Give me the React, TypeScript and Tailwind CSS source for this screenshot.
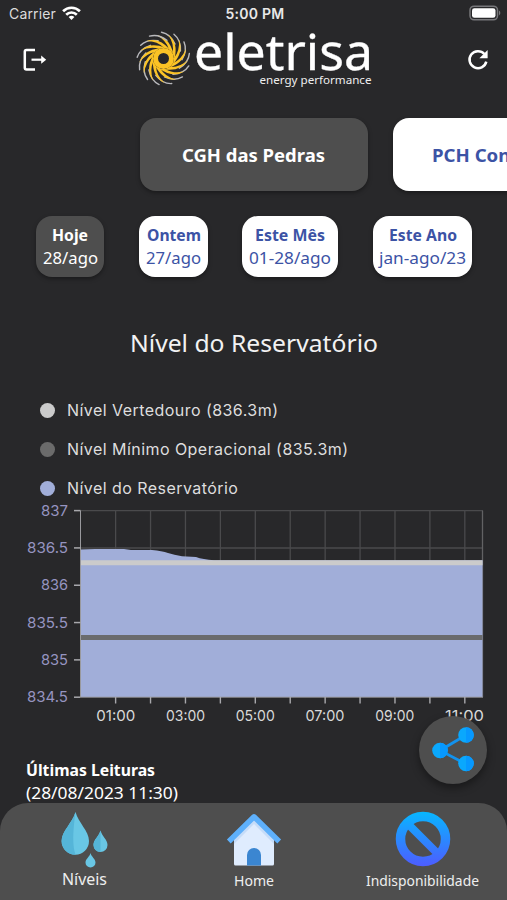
const PLANTS = [
  { name: "CGH das Pedras", active: true },
  { name: "PCH Confluência", active: false },
];

const PERIODS = [
  { label: "Hoje", range: "28/ago", size: "w-[68px]", labelWidth: 36, rangeWidth: 55, active: true },
  { label: "Ontem", range: "27/ago", size: "w-[69px] ml-[35px]", labelWidth: 54, rangeWidth: 55, active: false },
  { label: "Este Mês", range: "01-28/ago", size: "w-24 ml-[34px]", labelWidth: 70, rangeWidth: 82, active: false },
  { label: "Este Ano", range: "jan-ago/23", size: "w-[99px] ml-[35px]", labelWidth: 68, rangeWidth: 87, active: false },
];

const LEGEND = [
  { label: "Nível Vertedouro (836.3m)", color: "bg-[#cbcbcb]" },
  { label: "Nível Mínimo Operacional (835.3m)", color: "bg-[#6b6b6b]" },
  { label: "Nível do Reservatório", color: "bg-[#a1aed9]" },
];

const Y_TICKS = ["837", "836.5", "836", "835.5", "835", "834.5"];
const HOURS = [1, 2, 3, 4, 5, 6, 7, 8, 9, 10, 11];
const BLADES = Array.from({ length: 13 }, (_, i) => (i * 360) / 13);

const StatusBar = () => (
  <div className="flex h-7 shrink-0 items-center justify-between pl-[9px] pr-[6px] font-['Inter',sans-serif] text-white">
    <div className="flex w-[110px] items-center gap-[6px] text-[14px] text-[#dcdcdc]">
      <span className="relative -top-px tracking-[0.15px]">Carrier</span>
      <svg className="relative -top-px" width="19" height="15" viewBox="0 0 19 15" fill="none" stroke="#fff" strokeWidth="2.7">
        <path d="M1.1 5.2a12 12 0 0 1 16.8 0" />
        <path d="M4.2 8.7a7.5 7.5 0 0 1 10.6 0" />
        <path d="M9.5 14 6.6 11.1a4.1 4.1 0 0 1 5.8 0Z" fill="#fff" stroke="none" />
      </svg>
    </div>
    <span className="relative -top-px text-[14px] font-semibold tracking-[0.25px] text-[#e8e8e8]">5:00 PM</span>
    <div className="flex w-[110px] justify-end">
      <svg className="relative -top-px" width="32" height="16" viewBox="0 0 32 16">
        <rect x="1" y="1.2" width="27.5" height="13.6" rx="4" fill="none" stroke="#77777a" strokeWidth="1.5" />
        <rect x="3" y="3.2" width="23.5" height="9.6" rx="2.4" fill="#fff" />
        <path d="M30 5.6c1.8.8 1.8 4 0 4.8Z" fill="#77777a" />
      </svg>
    </div>
  </div>
);

const Logo = () => (
  <svg width="240" height="64" viewBox="134 28 240 64" className="font-['Noto_Sans',sans-serif]">
    <g transform="translate(163.5 58.5)" fill="none" strokeLinecap="round">
      {BLADES.map((angle) => (
        <g key={angle} transform={`rotate(${angle})`}>
          <path d="M-2 -26.3Q7 -24.5 11.5 -14.5" stroke="#b9b9bd" strokeWidth="1.4" />
          <path d="M-7 -23.5Q6 -21 9.8 -5L5.5 -9Q3 -18 -7 -23.5Z" fill="#fbc325" />
        </g>
      ))}
      <circle r="8" stroke="#fbc325" strokeWidth="5" />
    </g>
    <text
      x="194"
      y="69.5"
      fontSize="49"
      textLength="179"
      lengthAdjust="spacingAndGlyphs"
      fill="#fff"
      stroke="#fff"
      strokeWidth=".3"
      strokeLinejoin="round"
    >
      eletrisa
    </text>
    <text x="259.5" y="84" fontSize="11.5" textLength="112" lengthAdjust="spacingAndGlyphs" fill="#eee">
      energy performance
    </text>
  </svg>
);

const Header = () => (
  <header className="flex h-16 shrink-0 justify-between pl-[22px] pr-[17px]">
    <svg className="mt-5" width="26" height="24" viewBox="0 0 26 24" fill="none" stroke="#fff" strokeWidth="2.5">
      <path d="M13 1.9H4.5Q2.8 1.9 2.8 3.6v16.2q0 1.7 1.7 1.7H13" />
      <path d="M9.5 11.7h11" strokeWidth="2.2" />
      <path d="m19.2 7.6 5 4.1-5 4.1Z" fill="#fff" stroke="none" />
    </svg>
    <div className="mr-[7px]">
      <Logo />
    </div>
    <svg className="mt-5" width="24" height="24" viewBox="0 0 24 24" fill="none" stroke="#fff" strokeWidth="2.5">
      <path d="M18.4 6A8.5 8.5 0 1 0 20.3 13.6" />
      <path d="M21.6 2v8.2h-8.2Z" fill="#fff" stroke="none" />
    </svg>
  </header>
);

const FitText = ({ text, width, size, bold }: { text: string; width: number; size: number; bold?: boolean }) => (
  <svg width={width} height={size + 7} className="block overflow-visible font-['Noto_Sans',sans-serif]">
    <text
      x="0"
      y={size}
      fontSize={size}
      fontWeight={bold ? 700 : 400}
      textLength={width}
      lengthAdjust="spacingAndGlyphs"
      fill="currentColor"
    >
      {text}
    </text>
  </svg>
);

const LevelChart = () => (
  <svg width="507" height="226" viewBox="0 504 507 226" className="block font-['Inter',sans-serif]">
    <g stroke="#4a4a4c" strokeWidth="1.3">
      <path d="M80 510.7H483M80 548H483" />
      {HOURS.map((h) => (
        <path key={h} d={`M${80.7 + h * 34.92} 510.7V697`} />
      ))}
      <path d="M482.5 510.7V697" stroke="#626264" />
    </g>
    <path
      d="M80.5 549.6 95 549.1H124L131 550H152Q162 551 168 553T182 556.3L196 557Q203 559.6 214 560.2H482.5V697H80.5Z"
      fill="#a1aed9"
    />
    <path d="M80.5 562.7H482.5" stroke="#cbcbcb" strokeWidth="5" />
    <path d="M80.5 637.4H482.5" stroke="#6a6b6d" strokeWidth="5" />
    <path d="M80.5 510.7V697M80.5 697.2H483" stroke="#99999d" strokeWidth="1" />
    {Y_TICKS.map((label, i) => (
      <g key={label}>
        <path d={`M74 ${510.6 + i * 37.32}h6.5`} stroke="#a8a8ac" strokeWidth="1.5" />
        <text
          x="68"
          y={515.8 + i * 37.32}
          fontSize="14.5"
          textAnchor="end"
          fill="#9694c0"
          textLength={label.length > 3 ? 41 : 27}
          lengthAdjust="spacingAndGlyphs"
        >
          {label}
        </text>
      </g>
    ))}
    {HOURS.map((h) => (
      <g key={h}>
        <path d={`M${80.7 + h * 34.92} 697v6.5`} stroke="#a8a8ac" strokeWidth="1.4" />
        {h % 2 === 1 && (
          <text
            x={80.9 + h * 34.87}
            y="720.6"
            fontSize="14.5"
            textAnchor="middle"
            fill="#d9d9d9"
            textLength="39"
            lengthAdjust="spacingAndGlyphs"
          >
            {`${String(h).padStart(2, "0")}:00`}
          </text>
        )}
      </g>
    ))}
  </svg>
);

const ShareButton = () => (
  <button className="absolute left-[419px] top-[716px] flex h-[68px] w-[68px] items-center justify-center rounded-full bg-[#4e4e4e] shadow-[0_4px_8px_rgba(0,0,0,0.4)]">
    <svg width="44" height="46" viewBox="0 0 44 46">
      <path d="M35 8 9 23.5 35 37" fill="none" stroke="#1292ee" strokeWidth="2.8" />
      {[[9, 23.5], [35, 8], [35, 36.5]].map(([cx, cy]) => (
        <g key={cy}>
          <circle cx={cx} cy={cy} r="7.8" fill="#0aa8fd" />
          <path d={`M${cx} ${cy - 7.8}a7.8 7.8 0 0 1 0 15.6Z`} fill="#0798ff" />
        </g>
      ))}
    </svg>
  </button>
);

const DropsIcon = () => (
  <svg width="48" height="56" viewBox="0 0 48 56">
    <path d="M14.5 0C17.5 11 28 19 28 29a13.7 13.7 0 0 1-27.4 0C.6 19 11.5 11 14.5 0Z" fill="#69c7e5" />
    <path d="M14.5 0C11.5 11 .6 19 .6 29a13.7 13.7 0 0 0 13.9 13.6Q10 31 14.5 0Z" fill="#55b5d8" />
    <path d="M39.5 18.5c1.5 6 7 9 7 14.5a7 7 0 0 1-14 0c0-5.5 5.5-8.5 7-14.5Z" fill="#69c7e5" />
    <path d="M39.5 18.5c-1.5 6-7 9-7 14.5a7 7 0 0 0 7 7Z" fill="#55b5d8" />
    <path d="M29.5 41c1 4 5 6 5 9.5a5 5 0 0 1-10 0c0-3.5 4-5.5 5-9.5Z" fill="#69c7e5" />
  </svg>
);

const HomeIcon = () => (
  <svg width="56" height="54" viewBox="0 0 56 54">
    <path d="M8 25 28 5l20 20v26q0 1.5-1.5 1.5h-37Q8 52.5 8 51Z" fill="#dfecfe" />
    <path d="M8 25 28 5l20 20v6L28 11 8 31Z" fill="#c6dcf8" />
    <path d="M21 52.5V42a7 7 0 0 1 14 0v10.5Z" fill="#3b86d1" />
    <path d="M2.8 28.5 28 3.8l25.2 24.7" fill="none" stroke="#5eb0fb" strokeWidth="5.4" strokeLinejoin="round" />
  </svg>
);

const BlockIcon = () => (
  <svg width="56" height="56" viewBox="0 0 56 56" fill="none" stroke="url(#block)" strokeWidth="9.5">
    <defs>
      <linearGradient id="block" gradientUnits="userSpaceOnUse" x1="0" y1="0" x2="0" y2="56">
        <stop offset="0" stopColor="#06b8ff" />
        <stop offset="1" stopColor="#4e5bff" />
      </linearGradient>
    </defs>
    <circle cx="28" cy="28" r="22.5" />
    <path d="m13 13 30 30" strokeWidth="8" />
  </svg>
);

export default function App() {
  return (
    <div className="relative flex h-[900px] w-[507px] flex-col overflow-hidden bg-[#28282a] font-['Noto_Sans',sans-serif] text-white">
      <StatusBar />
      <Header />

      {/* Plants */}
      <div className="mt-[26px] flex shrink-0 gap-[25px] pl-[140px]">
        {PLANTS.map((plant) => (
          <button
            key={plant.name}
            className={`flex h-[73px] w-[228px] shrink-0 items-center rounded-2xl pt-[3px] shadow-[0_2px_4px_rgba(0,0,0,0.35)] ${
              plant.active ? "bg-[#4e4e4e] pl-[42px] text-white" : "bg-white pl-[39px] text-[#3c53a5]"
            }`}
          >
            <FitText text={plant.name} width={plant.active ? 143 : 153} size={18} bold />
          </button>
        ))}
      </div>

      {/* Periods */}
      <div className="mt-[25px] flex shrink-0 pl-9">
        {PERIODS.map((period) => (
          <button
            key={period.label}
            className={`flex h-[61px] shrink-0 flex-col items-center rounded-2xl pt-[9px] shadow-[0_2px_4px_rgba(0,0,0,0.35)] ${period.size} ${
              period.active ? "bg-[#4e4e4e] text-white" : "bg-white text-[#3c53a5]"
            }`}
          >
            <FitText text={period.label} width={period.labelWidth} size={16} bold />
            <FitText text={period.range} width={period.rangeWidth} size={16} />
          </button>
        ))}
      </div>

      <h1 className="mt-[51px] flex h-8 shrink-0 justify-center text-[#f2f2f2]">
        <FitText text="Nível do Reservatório" width={248} size={24} />
      </h1>

      {/* Legend */}
      <ul className="mt-[31px] flex shrink-0 flex-col pl-10 font-['Inter',sans-serif] text-[16px] tracking-[0.45px] text-[#dedede]">
        {LEGEND.map((item) => (
          <li key={item.label} className="flex h-[39px] items-center gap-3">
            <span className={`h-[15px] w-[15px] rounded-full ${item.color}`} />
            <span className="-mt-px">{item.label}</span>
          </li>
        ))}
      </ul>

      <div className="-mt-1 shrink-0">
        <LevelChart />
      </div>

      {/* Last readings */}
      <div className="mt-[30px] flex shrink-0 flex-col pl-[26px]">
        <FitText text="Últimas Leituras" width={129} size={16} bold />
        <FitText text="(28/08/2023 11:30)" width={152} size={16} />
      </div>

      <nav className="absolute inset-x-0 bottom-0 flex h-[97px] rounded-t-[28px] bg-[#4e4e4e] text-[#eee]">
        <div className="flex w-[169px] flex-col items-center gap-px pt-[9px]">
          <DropsIcon />
          <FitText text="Níveis" width={45} size={16} />
        </div>
        <div className="flex w-[169px] flex-col items-center gap-[5px] pt-[10px]">
          <HomeIcon />
          <FitText text="Home" width={40} size={14} />
        </div>
        <div className="flex w-[169px] flex-col items-center gap-[5px] pt-2">
          <BlockIcon />
          <FitText text="Indisponibilidade" width={113} size={14} />
        </div>
      </nav>

      <ShareButton />
    </div>
  );
}
